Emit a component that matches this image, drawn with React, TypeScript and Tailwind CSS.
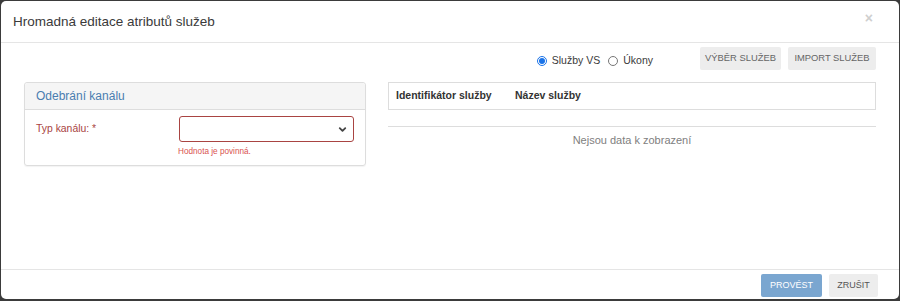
import React from "react";

const font = { fontFamily: '"Liberation Sans", Arial, sans-serif' };

const App = () => {
  return (
    <div className="w-[900px] h-[301px] bg-[#3b3b3b] pt-px pl-px pr-px pb-[2px]" style={font}>
      <div className="h-full bg-white rounded-[5px] flex flex-col text-[#333]">
        {/* header */}
        <div className="h-[42px] shrink-0 border-b border-[#e5e5e5] flex items-center justify-between pl-[12px] pr-[26px]">
          <h4 className="text-[13.5px] text-[#3a3a3a] pt-px">Hromadná editace atributů služeb</h4>
          <span className="text-[14px] font-bold text-[#cfcfcf] leading-none -mt-[8px]">×</span>
        </div>

        {/* body */}
        <div className="flex-1 px-[23px] pt-[4px]">
          <div className="flex items-center justify-end h-[22px]">
            <label className="flex items-center text-[10.5px] text-[#3a3a3a] mt-[5px]">
              <span className="w-[10px] h-[10px] rounded-full border border-[#1a73e8] flex items-center justify-center mr-[5px]">
                <span className="w-[6px] h-[6px] rounded-full bg-[#1a73e8]" />
              </span>
              Služby VS
            </label>
            <label className="flex items-center text-[10.5px] text-[#3a3a3a] mt-[5px] ml-[8px]">
              <span className="w-[10px] h-[10px] rounded-full border border-[#767676] mr-[5px]" />
              Úkony
            </label>
            <button className="ml-[47px] h-[23px] w-[81px] bg-[#ededed] rounded-[2px] text-[9.4px] text-[#666]">
              VÝBĚR SLUŽEB
            </button>
            <button className="ml-[7px] h-[23px] w-[88px] bg-[#ededed] rounded-[2px] text-[9.4px] text-[#666]">
              IMPORT SLUŽEB
            </button>
          </div>

          <div className="flex gap-[22px] mt-[13px]">
            {/* left panel */}
            <div className="w-[342px] h-[84px] border border-[#ddd] rounded-[3px] shadow-[0_1px_1px_rgba(0,0,0,0.05)]">
              <div className="h-[27px] bg-[#f5f5f5] border-b border-[#ddd] rounded-t-[3px] flex items-center pl-[11px] text-[12px] text-[#4a7db0]">
                Odebrání kanálu
              </div>
              <div className="flex pl-[11px] pt-[6px]">
                <div className="w-[143px] text-[10.4px] text-[#a94442] pt-[5px]">Typ kanálu: *</div>
                <div className="w-[175px]">
                  <div className="h-[26px] border border-[#a94442] rounded-[3px] flex items-center justify-end pr-[5px]">
                    <svg width="11" height="11" viewBox="0 0 24 24" fill="none" stroke="#444" strokeWidth="4" strokeLinecap="round" strokeLinejoin="round">
                      <polyline points="6 9 12 15 18 9" />
                    </svg>
                  </div>
                  <div className="text-[8.2px] text-[#d9534f] mt-[4px] -ml-px">Hodnota je povinná.</div>
                </div>
              </div>
            </div>

            {/* right table */}
            <div className="flex-1">
              <div className="h-[28px] border border-[#ddd] flex items-center pl-[7px] text-[10.5px] font-bold text-[#333]">
                <span className="w-[119px]">Identifikátor služby</span>
                <span>Název služby</span>
              </div>
              <div className="mt-[16px] border-t border-[#ddd] pt-[5px] text-center text-[11px] text-[#808080]">
                Nejsou data k zobrazení
              </div>
            </div>
          </div>
        </div>

        {/* footer */}
        <div className="h-[30px] shrink-0 border-t border-[#e5e5e5] flex items-start justify-end pr-[21px] pt-[4px] gap-[7px]">
          <button className="h-[23px] w-[61px] bg-[#7aa6d0] rounded-[2px] text-[9px] text-white">PROVÉST</button>
          <button className="h-[23px] w-[49px] bg-[#ededed] rounded-[2px] text-[9px] text-[#555]">ZRUŠIT</button>
        </div>
      </div>
    </div>
  );
};

export default App;
